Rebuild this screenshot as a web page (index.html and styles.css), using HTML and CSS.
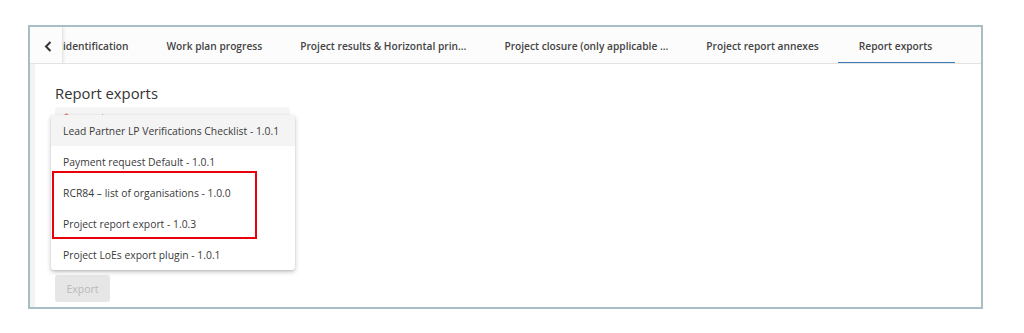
FILE: index.html
```html
<!DOCTYPE html>
<html lang="en">
  <head>
    <meta charset="utf-8">
    <link rel="stylesheet" href="styles.css">
  </head>
  <body>
    <div class="frame">
      <div class="tab-bar">
        <div class="tab-back">
          <svg width="8" height="11" viewBox="0 0 8 11">
            <path d="M6.5 1 L2 5.5 L6.5 10" fill="none" stroke="#333" stroke-width="2"/>
          </svg>
        </div>
        <div class="tabs">
          <div class="tab tab-first">identification</div>
          <div class="tab">Work plan progress</div>
          <div class="tab">Project results &amp; Horizontal prin...</div>
          <div class="tab">Project closure (only applicable ...</div>
          <div class="tab">Project report annexes</div>
          <div class="tab active">Report exports</div>
        </div>
      </div>

      <div class="card">
        <h2 class="card-title">Report exports</h2>

        <div class="select-field">
          <span class="select-label">*</span>
          <span class="select-tick"></span>

          <div class="dropdown">
            <div class="option selected">Lead Partner LP Verifications Checklist - 1.0.1</div>
            <div class="option">Payment request Default - 1.0.1</div>
            <div class="option">RCR84 – list of organisations - 1.0.0</div>
            <div class="option">Project report export - 1.0.3</div>
            <div class="option">Project LoEs export plugin - 1.0.1</div>
            <div class="highlight-box"></div>
          </div>
        </div>

        <button class="btn-export" disabled>Export</button>
      </div>
    </div>
  </body>
</html>
```

FILE: styles.css
```css
body {
  margin: 0;
  background: #ffffff;
  font-family: "Open Sans", "Noto Sans", sans-serif;
  color: #333;
}

.frame {
  box-sizing: border-box;
  width: 955px;
  height: 284px;
  margin: 25px 0 0 28px;
  border: 2px solid #a9bdc5;
  background: #f3f3f3;
  display: flex;
  flex-direction: column;
}

/* tabs */
.tab-bar {
  height: 36px;
  display: flex;
  background: #fcfcfc;
  border-bottom: 1px solid #e3e3e3;
  overflow: hidden;
}

.tab-back {
  width: 33px;
  flex: none;
  display: flex;
  align-items: center;
  justify-content: center;
  padding: 3px 0 0 3px;
  box-sizing: border-box;
  border-right: 1px solid #e6e6e6;
  box-shadow: 1px 0 3px rgba(0, 0, 0, 0.08);
  position: relative;
  z-index: 1;
}

.tabs {
  display: flex;
  flex: 1;
}

.tab {
  padding: 3px 19px 0;
  display: flex;
  align-items: center;
  font-size: 10.2px;
  font-weight: 600;
  color: #444;
  white-space: nowrap;
  border-bottom: 2px solid transparent;
  margin-bottom: -1px;
}

.tab-first {
  padding-left: 0;
}

.tab.active {
  border-bottom-color: #3d7ab8;
  padding: 3px 23px 0 21px;
}

/* content card */
.card {
  flex: 1;
  margin-left: 5px;
  background: #ffffff;
  padding: 18px 20px 0;
}

.card-title {
  margin: 0;
  font-size: 14.8px;
  font-weight: 400;
  line-height: 22px;
  color: #333;
}

.select-field {
  position: relative;
  margin-top: 3px;
  width: 235px;
  height: 36px;
  background: #f5f5f5;
  border-radius: 3px 3px 0 0;
}

.select-label {
  position: absolute;
  left: 9px;
  top: 3px;
  font-size: 9px;
  color: #e05555;
}

.select-tick {
  position: absolute;
  left: 47px;
  top: 7px;
  width: 1px;
  height: 2px;
  background: #bbb;
}

.dropdown {
  position: absolute;
  left: -4px;
  top: 8px;
  width: 244px;
  background: #ffffff;
  border-radius: 3px;
  box-shadow: 0 2px 5px rgba(0, 0, 0, 0.22), 0 1px 2px rgba(0, 0, 0, 0.1);
  z-index: 2;
}

.option {
  height: 31px;
  line-height: 32px;
  padding-left: 12px;
  font-size: 10.35px;
  color: #3a3a3a;
  white-space: nowrap;
}

.option.selected {
  background: #f4f4f4;
}

.highlight-box {
  position: absolute;
  left: 1px;
  top: 56px;
  width: 205px;
  height: 68px;
  box-sizing: border-box;
  border: 2px solid #e8000b;
}

.btn-export {
  margin-top: 132px;
  width: 55px;
  height: 27px;
  border: none;
  border-radius: 3px;
  background: #e6e6e6;
  color: #b9b9b9;
  font-family: "Open Sans", "Noto Sans", sans-serif;
  font-size: 10.5px;
  padding: 0;
}
```
